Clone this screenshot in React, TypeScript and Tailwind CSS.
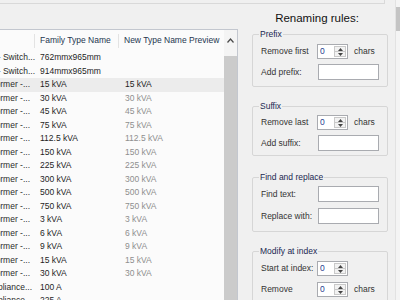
import type { ReactNode } from "react";

type Row = { name: string; pad: string; type: string; preview: string; active?: boolean };

const rows: Row[] = [
    { name: "Panelboard - Switch...", pad: "pr-0", type: "762mmx965mm", preview: "" },
    { name: "Panelboard - Switch...", pad: "pr-0", type: "914mmx965mm", preview: "" },
    { name: "Transformer -...", pad: "pr-[5px]", type: "15 kVA", preview: "15 kVA", active: true },
    { name: "Transformer -...", pad: "pr-[5px]", type: "30 kVA", preview: "30 kVA" },
    { name: "Transformer -...", pad: "pr-[5px]", type: "45 kVA", preview: "45 kVA" },
    { name: "Transformer -...", pad: "pr-[5px]", type: "75 kVA", preview: "75 kVA" },
    { name: "Transformer -...", pad: "pr-[5px]", type: "112.5 kVA", preview: "112.5 kVA" },
    { name: "Transformer -...", pad: "pr-[5px]", type: "150 kVA", preview: "150 kVA" },
    { name: "Transformer -...", pad: "pr-[5px]", type: "225 kVA", preview: "225 kVA" },
    { name: "Transformer -...", pad: "pr-[5px]", type: "300 kVA", preview: "300 kVA" },
    { name: "Transformer -...", pad: "pr-[5px]", type: "500 kVA", preview: "500 kVA" },
    { name: "Transformer -...", pad: "pr-[5px]", type: "750 kVA", preview: "750 kVA" },
    { name: "Transformer -...", pad: "pr-[5px]", type: "3 kVA", preview: "3 kVA" },
    { name: "Transformer -...", pad: "pr-[5px]", type: "6 kVA", preview: "6 kVA" },
    { name: "Transformer -...", pad: "pr-[5px]", type: "9 kVA", preview: "9 kVA" },
    { name: "Transformer -...", pad: "pr-[5px]", type: "15 kVA", preview: "15 kVA" },
    { name: "Transformer -...", pad: "pr-[5px]", type: "30 kVA", preview: "30 kVA" },
    { name: "Appliance...", pad: "pr-[3px]", type: "100 A", preview: "" },
    { name: "Appliance...", pad: "pr-[3px]", type: "225 A", preview: "" },
];

function Spinner() {
    return (
        <div className="flex w-[31px] h-[15px] border border-[#a9abb0] bg-white">
            <span className="flex-1 pl-[2px] leading-[13px] text-[#1f3f8f]">0</span>
            <div className="flex flex-col w-[12px] my-[1px] mr-[1px] border border-[#c9c9c9] bg-[#f2f2f2]">
                <div className="flex-1 flex items-center justify-center border-b border-[#c9c9c9]">
                    <svg width="5" height="3" viewBox="0 0 5 3"><path d="M0 3 L2.5 0 L5 3 Z" fill="#444" /></svg>
                </div>
                <div className="flex-1 flex items-center justify-center">
                    <svg width="5" height="3" viewBox="0 0 5 3"><path d="M0 0 L2.5 3 L5 0 Z" fill="#444" /></svg>
                </div>
            </div>
        </div>
    );
}

function TextBox() {
    return <div className="w-[61px] h-[16px] border border-[#a9abb0] bg-white" />;
}

function Group({ title, className, children }: { title: string; className: string; children: ReactNode }) {
    return (
        <fieldset className={`shrink-0 border border-[#d6d6d6] rounded-[2px] px-[8px] ${className}`}>
            <legend className="-ml-[2px] px-[1px] leading-[10px] text-[#1b2850]">{title}</legend>
            {children}
        </fieldset>
    );
}

export default function App() {
    return (
        <div className="flex w-[400px] h-[300px] overflow-hidden bg-[#f0f0f0] font-['Liberation_Sans',Arial,sans-serif] text-[8.5px] text-[#2a2a2a]">
            <div className="flex flex-col w-[395px]">
                <div className="shrink-0 h-[4px] w-[385px] border-b border-r border-[#d9d9d9]" />

                <div className="flex flex-1 min-h-0">
                    <div className="flex w-[238px] mt-[25px] border-t border-r border-[#c3c7cf] bg-[#fbfbfb] overflow-hidden">
                        <div className="flex-1 min-w-0">
                            <div className="flex items-center h-[21px] text-[#24364f]">
                                <div className="w-[34px]" />
                                <div className="w-px h-[14px] bg-[#e3e3e3]" />
                                <div className="w-[83px] pl-[5px]">Family Type Name</div>
                                <div className="w-px h-[14px] bg-[#e3e3e3]" />
                                <div className="pl-[5px] whitespace-nowrap">New Type Name Preview</div>
                            </div>
                            {rows.map((r, i) => (
                                <div key={i} className={`flex h-[13.5px] leading-[13.5px] whitespace-nowrap ${r.active ? "bg-[#ececec]" : ""}`}>
                                    <div className={`flex justify-end w-[35px] overflow-hidden ${r.pad}`}>
                                        <span className="shrink-0">{r.name}</span>
                                    </div>
                                    <div className="w-[84px] pl-[5px] text-[#1e1e1e]">{r.type}</div>
                                    <div className={`pl-[6px] ${r.active ? "text-[#1e1e1e]" : "text-[#8e8e8e]"}`}>{r.preview}</div>
                                </div>
                            ))}
                        </div>
                        <div className="flex flex-col w-[13px] bg-[#f4f4f4]">
                            <div className="shrink-0 flex justify-center h-[26px] pt-[8px]">
                                <svg width="7" height="5" viewBox="0 0 7 5">
                                    <path d="M0.5 4.5 L3.5 1 L6.5 4.5" fill="none" stroke="#4a4a4a" strokeWidth="1.2" />
                                </svg>
                            </div>
                            <div className="flex-1 bg-[#cbcbcb]" />
                        </div>
                    </div>

                    <div className="flex flex-col w-[155px] ml-[2px] pl-[12px] pr-[7px] text-[#333]">
                        <div className="shrink-0 pt-[7px] pr-[6px] text-center text-[11.5px] leading-[14px] text-[#111]">Renaming rules:</div>

                        <Group title="Prefix" className="mt-[4px] pt-[5px] pb-[6px]">
                            <div className="flex items-center h-[15px]">
                                <span className="w-[56px]">Remove first</span>
                                <Spinner />
                                <span className="ml-[6px]">chars</span>
                            </div>
                            <div className="flex items-center h-[16px] mt-[5px]">
                                <span className="w-[57px]">Add prefix:</span>
                                <TextBox />
                            </div>
                        </Group>

                        <Group title="Suffix" className="mt-[14px] pt-[4px] pb-[4px]">
                            <div className="flex items-center h-[15px]">
                                <span className="w-[56px]">Remove last</span>
                                <Spinner />
                                <span className="ml-[6px]">chars</span>
                            </div>
                            <div className="flex items-center h-[16px] mt-[5px]">
                                <span className="w-[57px]">Add suffix:</span>
                                <TextBox />
                            </div>
                        </Group>

                        <Group title="Find and replace" className="mt-[16px] pt-[4px] pb-[7px]">
                            <div className="flex items-center h-[16px]">
                                <span className="w-[57px]">Find text:</span>
                                <TextBox />
                            </div>
                            <div className="flex items-center h-[16px] mt-[6px]">
                                <span className="w-[57px]">Replace with:</span>
                                <TextBox />
                            </div>
                        </Group>

                        <Group title="Modify at index" className="mt-[14px] pt-[5px] pb-[6px]">
                            <div className="flex items-center h-[15px]">
                                <span className="w-[56px]">Start at index:</span>
                                <Spinner />
                            </div>
                            <div className="flex items-center h-[15px] mt-[6px]">
                                <span className="w-[56px]">Remove</span>
                                <Spinner />
                                <span className="ml-[6px]">chars</span>
                            </div>
                        </Group>
                    </div>
                </div>
            </div>

            <div className="flex flex-col w-[5px] border-l border-[#e2e2e2] bg-[#f4f4f4]">
                <div className="h-[24px] mt-[7px] bg-[#c4c4c4]" />
            </div>
        </div>
    );
}
